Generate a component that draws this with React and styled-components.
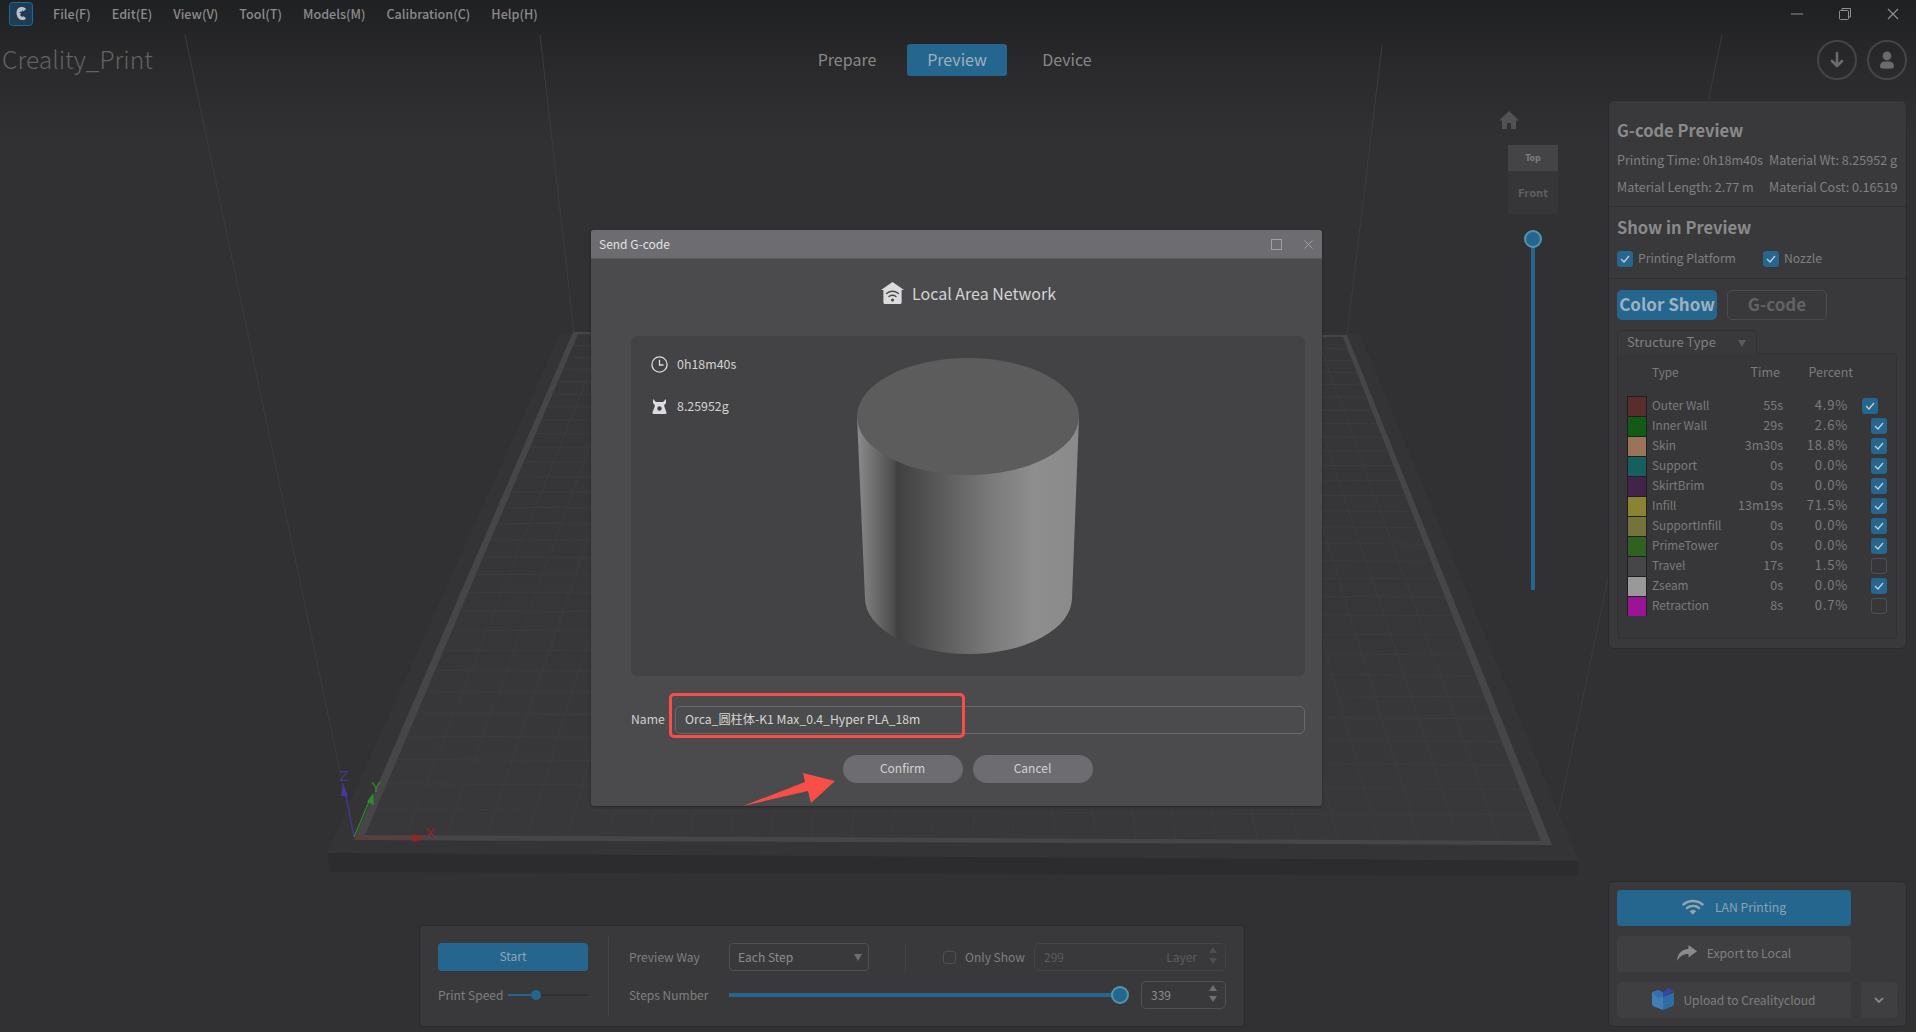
import React from 'react';
import styled, { createGlobalStyle } from 'styled-components';

const GlobalStyle = createGlobalStyle`
  html, body, #root { margin: 0; padding: 0; height: 100%; }
  body {
    background: #313133;
    font-family: "Noto Sans CJK SC", "Noto Sans", sans-serif;
    overflow: hidden;
  }
  * { box-sizing: border-box; }
`;

const BLUE = '#25668f';

const Page = styled.div`
  position: relative;
  width: 100vw;
  height: 100vh;
  overflow: hidden;
  background: linear-gradient(#1f2022 0, #2a2a2c 70px, #313133 140px, #313133 100%);
`;

const SceneSvg = styled.svg`
  position: absolute;
  inset: 0;
  width: 100%;
  height: 100%;
`;

const Shell = styled.div`
  position: relative;
  display: flex;
  flex-direction: column;
  height: 100%;
`;

const TitleBar = styled.div`
  display: flex;
  align-items: center;
  height: 28px;
  padding-left: 9px;
`;

const Menu = styled.nav`
  display: flex;
  gap: 21px;
  margin-left: 20px;
  padding-bottom: 2px;
  color: #8b8b8b;
  font-size: 12.6px;
  font-weight: 500;
`;

const WindowButtons = styled.div`
  display: flex;
  align-items: center;
  gap: 36px;
  margin-left: auto;
  padding-right: 17px;
  color: #8f8f8f;
`;

const HeaderRow = styled.header`
  display: grid;
  grid-template-columns: 1fr auto 1fr;
  align-items: center;
  height: 64px;
  padding: 0 9px 0 2px;
`;

const AppTitle = styled.div`
  color: #626262;
  font-size: 24.6px;
  font-weight: 300;
  line-height: 1;
  margin-bottom: 3px;
`;

const Tabs = styled.div`
  display: flex;
  align-items: center;
  margin-left: 5px;
`;

const Tab = styled.div`
  width: 100px;
  height: 32px;
  margin: 0 5px;
  padding-bottom: 3px;
  border-radius: 3px;
  display: flex;
  align-items: center;
  justify-content: center;
  font-size: 16px;
  color: ${(p) => (p.$active ? '#9fb0bc' : '#878787')};
  background: ${(p) => (p.$active ? BLUE : 'transparent')};
`;

const RoundButtons = styled.div`
  display: flex;
  justify-content: flex-end;
  gap: 10px;
`;

const RoundButton = styled.div`
  width: 40px;
  height: 40px;
  border-radius: 50%;
  border: 2px solid #454547;
  color: #6b6b6b;
  display: flex;
  align-items: center;
  justify-content: center;
`;

const Workspace = styled.main`
  flex: 1;
  display: flex;
  min-height: 0;
  padding: 0 9px 5px 419px;
`;

const CenterArea = styled.div`
  flex: 1;
  display: flex;
  flex-direction: column;
  justify-content: flex-end;
`;

const ControlPanel = styled.section`
  display: flex;
  width: 826px;
  height: 102px;
  padding: 11px 0 0 18px;
  background: #39393b;
  border: 1px solid #2b2b2d;
  border-radius: 5px;
`;

const StartColumn = styled.div`
  width: 150px;
  flex: none;
  padding-top: 6px;
  display: flex;
  flex-direction: column;
  gap: 10px;
`;

const StartButton = styled.div`
  height: 28px;
  padding-bottom: 3px;
  border-radius: 4px;
  background: ${BLUE};
  color: #8fa5b4;
  font-size: 12px;
  display: flex;
  align-items: center;
  justify-content: center;
`;

const FieldRow = styled.div`
  display: flex;
  align-items: center;
  height: 28px;
  font-size: 12px;
  color: #7f7f7f;
  white-space: nowrap;
`;

const RowText = styled.span`
  padding-bottom: 2px;
  flex: none;
  width: ${(p) => (p.$w ? `${p.$w}px` : 'auto')};
`;

const VDivider = styled.div`
  width: 1px;
  flex: none;
  height: ${(p) => p.$h}px;
  background: #454547;
  margin: 0 ${(p) => p.$right}px 0 ${(p) => p.$left}px;
`;

const ControlColumn = styled.div`
  width: 595px;
  flex: none;
  padding-top: 6px;
  display: flex;
  flex-direction: column;
  gap: 10px;
`;

const SelectBox = styled.div`
  position: relative;
  width: 140px;
  height: 28px;
  flex: none;
  padding: 0 0 2px 8px;
  border: 1px solid #515153;
  border-radius: 4px;
  color: #8c8c8c;
  display: flex;
  align-items: center;
`;

const Caret = styled.span`
  position: absolute;
  right: ${(p) => p.$right}px;
  top: ${(p) => p.$top}px;
  width: 0;
  height: 0;
  border-left: 4px solid transparent;
  border-right: 4px solid transparent;
  border-top: 7px solid ${(p) => p.$color || '#6e6e6e'};
`;

const NumberBox = styled.div`
  position: relative;
  width: ${(p) => p.$w}px;
  height: 28px;
  flex: none;
  margin-left: ${(p) => p.$ml || 0}px;
  padding: 0 28px 2px 9px;
  border: 1px solid ${(p) => (p.$off ? '#444446' : '#515153')};
  border-radius: 5px;
  color: ${(p) => (p.$off ? '#5c5c5c' : '#8c8c8c')};
  display: flex;
  align-items: center;
  justify-content: space-between;
`;

const Spinner = styled.span`
  position: absolute;
  right: 8px;
  top: 3px;
  display: flex;
  flex-direction: column;
  gap: 5px;
`;

const SpinArrow = styled.span`
  width: 0;
  height: 0;
  border-left: 4px solid transparent;
  border-right: 4px solid transparent;
  ${(p) => (p.$down ? 'border-top' : 'border-bottom')}: 6px solid ${(p) => (p.$off ? '#4e4e50' : '#6f6f6f')};
`;

const SliderTrack = styled.div`
  position: relative;
  flex: none;
  width: ${(p) => p.$w}px;
  height: ${(p) => p.$h}px;
  margin-left: ${(p) => p.$ml || 0}px;
  background: ${(p) => p.$bg};
`;

const SliderFill = styled.div`
  height: 100%;
  background: ${BLUE};
`;

const Knob = styled.span`
  position: absolute;
  top: 50%;
  width: ${(p) => p.$size}px;
  height: ${(p) => p.$size}px;
  transform: translate(-50%, -50%);
  border-radius: 50%;
  background: ${BLUE};
  border: ${(p) => (p.$ring ? '2px solid #4f97ad' : 'none')};
`;

const ViewTools = styled.aside`
  width: 59px;
  margin-right: 50px;
  padding-top: 19px;
  display: flex;
  flex-direction: column;
`;

const HomeIcon = styled.svg`
  width: 20px;
  height: 18px;
  color: #525254;
`;

const CubeFace = styled.div`
  align-self: flex-end;
  width: 50px;
  height: ${(p) => p.$h}px;
  margin-top: ${(p) => p.$mt || 0}px;
  padding-top: ${(p) => p.$pt || 0}px;
  background: ${(p) => p.$bg};
  color: ${(p) => p.$color};
  font-family: "DejaVu Sans", sans-serif;
  font-weight: 700;
  font-size: ${(p) => p.$size}px;
  display: flex;
  align-items: center;
  justify-content: center;
`;

const LayerSlider = styled.div`
  position: relative;
  align-self: flex-end;
  margin: 24px 23px 0 0;
  width: 4px;
  height: 352px;
  background: ${BLUE};
`;

const LayerKnob = styled.span`
  position: absolute;
  left: 50%;
  top: -8px;
  width: 18px;
  height: 18px;
  transform: translateX(-50%);
  border-radius: 50%;
  background: ${BLUE};
  border: 2px solid #4f97ad;
`;

const SideColumn = styled.aside`
  width: 299px;
  padding-top: 8px;
  display: flex;
  flex-direction: column;
  justify-content: space-between;
`;

const Panel = styled.section`
  background: #39393b;
  border: 1px solid #2a2a2c;
  border-radius: 6px;
`;

const PanelSection = styled.div`
  padding: ${(p) => p.$pad};
  border-bottom: ${(p) => (p.$last ? 'none' : '1px solid #2f2f31')};
`;

const PanelTitle = styled.h2`
  margin: 0;
  font-size: 16.5px;
  font-weight: 700;
  line-height: 22px;
  color: #8a8a8a;
`;

const InfoGrid = styled.div`
  display: grid;
  grid-template-columns: 152px auto;
  grid-auto-rows: 27px;
  margin-top: 5px;
  font-size: 12.6px;
  color: #808080;
  white-space: nowrap;
  align-items: center;
`;

const CheckRow = styled.div`
  display: flex;
  align-items: center;
  margin-top: 13px;
  height: 16px;
  font-size: 12.2px;
  color: #808080;
`;

const CheckLabel = styled.span`
  width: ${(p) => (p.$w ? `${p.$w}px` : 'auto')};
  padding-bottom: 2px;
`;

const Box = styled.span`
  flex: none;
  width: ${(p) => p.$size || 16}px;
  height: ${(p) => p.$size || 16}px;
  border-radius: 3px;
  color: #c3cdd4;
  background: ${(p) => (p.$on ? BLUE : 'transparent')};
  border: ${(p) => (p.$on ? 'none' : '1px solid #505052')};
  margin-right: ${(p) => p.$mr || 0}px;
  display: flex;
  align-items: center;
  justify-content: center;
`;

const PushButtons = styled.div`
  display: flex;
  gap: 10px;
`;

const ModeButton = styled.div`
  width: 100px;
  height: 30px;
  padding-bottom: 3px;
  border-radius: 5px;
  font-size: 17px;
  font-weight: 700;
  display: flex;
  align-items: center;
  justify-content: center;
  color: ${(p) => (p.$active ? '#9db2c0' : '#626264')};
  background: ${(p) => (p.$active ? BLUE : 'transparent')};
  border: ${(p) => (p.$active ? 'none' : '1px solid #4b4b4d')};
`;

const DropTab = styled.div`
  position: relative;
  width: 140px;
  height: 24px;
  margin-top: 10px;
  margin-bottom: -1px;
  padding-left: 9px;
  background: #39393b;
  border: 1px solid #313133;
  border-bottom: none;
  border-radius: 4px 4px 0 0;
  font-size: 13px;
  line-height: 21px;
  color: #808080;
  z-index: 1;
`;

const TableBox = styled.div`
  height: 286px;
  padding: 8px 0 0 9px;
  background: #373739;
  border: 1px solid #313133;
  border-radius: 0 4px 4px 4px;
`;

const TableRow = styled.div`
  display: grid;
  grid-template-columns: 25px 86px 45px 65px 1fr;
  height: 20px;
  align-items: center;
  font-size: 12.5px;
  color: #7b7b7b;
  margin-bottom: ${(p) => (p.$head ? 13 : 0)}px;
`;

const Swatch = styled.span`
  width: 20px;
  height: 20px;
  background: ${(p) => p.$color};
  border: 1px solid #1f1f21;
  border-width: 1px 1px 0;
`;

const Cell = styled.span`
  text-align: right;
  white-space: nowrap;
  padding-bottom: 2px;
  margin-right: ${(p) => p.$shift || 0}px;
`;

const PercentCell = styled(Cell)`
  font-size: 13px;
  letter-spacing: 0.8px;
`;

const TypeCell = styled.span`
  white-space: nowrap;
  padding-bottom: 2px;
  font-size: 11.8px;
`;

const CheckCell = styled.span`
  display: flex;
  padding-left: ${(p) => (p.$first ? 14 : 23)}px;
`;

const PrintPanel = styled(Panel)`
  height: 146px;
  padding: 8px 8px;
  display: grid;
  grid-template-columns: 234px 36px;
  grid-auto-rows: 36px;
  column-gap: 10px;
  row-gap: 10px;
`;

const PrintButton = styled.div`
  grid-column: 1;
  padding-bottom: 2px;
  border-radius: 4px;
  background: ${(p) => (p.$primary ? BLUE : '#3f3f41')};
  color: ${(p) => (p.$primary ? '#8ea3b2' : '#7e7e7e')};
  font-size: ${(p) => p.$size || 12.2}px;
  display: flex;
  align-items: center;
  justify-content: center;
  gap: ${(p) => p.$gap}px;
`;

const MoreButton = styled.div`
  grid-column: 2;
  border-radius: 4px;
  background: #3f3f41;
  color: #858585;
  display: flex;
  align-items: center;
  justify-content: center;
`;

const Dialog = styled.div`
  position: absolute;
  left: 591px;
  top: 230px;
  width: 731px;
  height: 576px;
  background: #4b4b4d;
  border-radius: 3px;
  box-shadow: 0 1px 3px rgba(0, 0, 0, 0.35);
  overflow: visible;
  display: flex;
  flex-direction: column;
`;

const DialogBar = styled.div`
  height: 29px;
  flex: none;
  padding: 0 9px 2px 8px;
  background: #6d6c70;
  border-bottom: 1px solid #5a5a5c;
  border-radius: 3px 3px 0 0;
  color: #e2e2e2;
  font-size: 12px;
  display: flex;
  align-items: center;
  justify-content: space-between;
`;

const DialogControls = styled.div`
  display: flex;
  align-items: center;
  gap: 22px;
  padding-left: 0;
  margin-top: 2px;
  color: #a2a2a4;
`;

const DialogHeading = styled.div`
  height: 77px;
  flex: none;
  display: flex;
  align-items: center;
  justify-content: center;
  gap: 8px;
  padding: 0 0 9px 24px;
  font-size: 16px;
  color: #d3d3d3;
`;

const Preview = styled.div`
  margin: 0 17px 0 40px;
  height: 340px;
  flex: none;
  padding: 21px 20px;
  background: #434345;
  border-radius: 6px;
  display: grid;
  grid-template-columns: 1fr auto 1fr;
`;

const Stats = styled.div`
  display: flex;
  flex-direction: column;
  gap: 25px;
  margin-top: -1px;
  color: #d3d3d3;
  font-size: 12.4px;
`;

const Stat = styled.div`
  display: flex;
  align-items: center;
  gap: 9px;
  height: 17px;
`;

const StatText = styled.span`
  padding-bottom: 2px;
`;

const CylinderSvg = styled.svg`
  margin-top: 1px;
`;

const NameRow = styled.div`
  position: relative;
  margin: 30px 17px 0 40px;
  display: flex;
  align-items: center;
  height: 28px;
  font-size: 12.2px;
  color: #cfcfcf;
`;

const NameLabel = styled.span`
  width: 44px;
  flex: none;
  padding-bottom: 2px;
`;

const NameInput = styled.div`
  flex: 1;
  height: 28px;
  padding: 0 0 2px 9px;
  border: 1px solid #68686a;
  border-radius: 5px;
  display: flex;
  align-items: center;
  color: #d6d6d6;
`;

const RedFrame = styled.div`
  position: absolute;
  left: 38px;
  top: -13px;
  width: 296px;
  height: 45px;
  border: 3px solid #f94d47;
  border-radius: 5px;
`;

const DialogActions = styled.div`
  display: flex;
  justify-content: center;
  gap: 10px;
  margin-top: 21px;
  padding-left: 22px;
`;

const PillButton = styled.div`
  width: 120px;
  height: 28px;
  padding-bottom: 3px;
  border-radius: 14px;
  background: #6d6c70;
  color: #d3d3d3;
  font-size: 12px;
  display: flex;
  align-items: center;
  justify-content: center;
`;

const ArrowMark = styled.svg`
  position: absolute;
  left: 152px;
  top: 543px;
  width: 92px;
  height: 33px;
`;

const menuItems = ['File(F)', 'Edit(E)', 'View(V)', 'Tool(T)', 'Models(M)', 'Calibration(C)', 'Help(H)'];

const rows = [
  { name: 'Outer Wall', time: '55s', pct: '4.9%', color: '#5a2d2d', on: true, first: true },
  { name: 'Inner Wall', time: '29s', pct: '2.6%', color: '#145a17', on: true },
  { name: 'Skin', time: '3m30s', pct: '18.8%', color: '#9a7459', on: true },
  { name: 'Support', time: '0s', pct: '0.0%', color: '#175e5e', on: true },
  { name: 'SkirtBrim', time: '0s', pct: '0.0%', color: '#40244a', on: true },
  { name: 'Infill', time: '13m19s', pct: '71.5%', color: '#8a8432', on: true },
  { name: 'SupportInfill', time: '0s', pct: '0.0%', color: '#73733a', on: true },
  { name: 'PrimeTower', time: '0s', pct: '0.0%', color: '#2f6222', on: true },
  { name: 'Travel', time: '17s', pct: '1.5%', color: '#464548', on: false },
  { name: 'Zseam', time: '0s', pct: '0.0%', color: '#999999', on: true },
  { name: 'Retraction', time: '8s', pct: '0.7%', color: '#9a1496', on: false },
];

const Tick = () => (
  <svg width="10" height="8" viewBox="0 0 10 8" fill="none" stroke="currentColor" strokeWidth="1.4">
    <path d="M1 4l3 3 5-6" />
  </svg>
);

const Logo = () => (
  <svg width="24" height="24" viewBox="0 0 24 24">
    <rect x="0.5" y="0.5" width="23" height="23" rx="3" fill="#1f3c55" stroke="#1c6a96" />
    <path d="M17 7c-2-2.6-6.6-2.6-8.4 0-1.8 2.6-1.2 7 1 9.4 2 2 5.4 2.2 7.4.4l-2-2.6c-1 .8-2.6.6-3.4-.4-.6-1-.4-2 .4-2.4l-2-1.4 3-.4.4-1.8 1 1.6z" fill="#b9c0c6" />
  </svg>
);

// perspective grid of the print bed, the far edge is about 0.65 of the near one
const bedGrid = () => {
  const n = 29;
  const near = { y: 835, left: 365, right: 1541, yRight: 841 };
  const far = { y: 334, left: 578, right: 1343, yRight: 337 };
  const lines = [];
  for (let i = 1; i < n; i++) {
    const s = i / n;
    const w = 1 / (1 + 0.538 * s);
    const p = (1 - w) / 0.35;
    const lerp = (a, b) => a + (b - a) * p;
    lines.push(
      <line key={`h${i}`} x1={lerp(near.left, far.left)} y1={lerp(near.y, far.y)} x2={lerp(near.right, far.right)} y2={lerp(near.yRight, far.yRight)} />
    );
    const xa = near.left + (near.right - near.left) * s;
    const xb = far.left + (far.right - far.left) * s;
    lines.push(<line key={`v${i}`} x1={xa} y1={835 + 6 * s} x2={xb} y2={334 + 3 * s} />);
  }
  return lines;
};

const Scene = () => (
  <SceneSvg viewBox="0 0 1916 1032" preserveAspectRatio="none">
    <defs>
      <linearGradient id="bedFill" x1="0" y1="0" x2="0" y2="1">
        <stop offset="0" stopColor="#353537" />
        <stop offset="1" stopColor="#38383a" />
      </linearGradient>
    </defs>
    <g stroke="#3c3c3e" strokeWidth="1" fill="none">
      <line x1="185" y1="35" x2="354" y2="838" />
      <line x1="540" y1="35" x2="574" y2="332" />
      <line x1="1382" y1="45" x2="1347" y2="335" />
      <line x1="1722" y1="35" x2="1552" y2="845" />
    </g>
    <polygon points="560,334 1360,334 1579,861 327,853" fill="#343436" />
    <polygon points="327,853 1579,861 1577,876 331,872" fill="#2c2c2e" />
    <polygon points="573,332 1347,335 1552,845 354,840" fill="#464648" />
    <polygon points="578,334 1343,337 1541,841 365,835" fill="url(#bedFill)" />
    <g stroke="#3d3d3f" strokeWidth="0.8">{bedGrid()}</g>
    <g fill="none" strokeWidth="1.2">
      <path d="M354 837L345 790" stroke="#46379a" />
      <path d="M354 837L371 797" stroke="#2f8a2a" />
      <path d="M354 838L420 838" stroke="#9a2222" />
    </g>
    <polygon points="343,783 348,796 341,796" fill="#46379a" />
    <polygon points="373,793 374,805 367,802" fill="#2f8a2a" />
    <polygon points="425,838 413,834 413,842" fill="#9a2222" />
    <g fontFamily="Liberation Sans, sans-serif" fontSize="15" textAnchor="middle">
      <text x="344" y="781" fill="#46379a">Z</text>
      <text x="376" y="792" fill="#2f8a2a">Y</text>
      <text x="430" y="838" fill="#9a2222">X</text>
    </g>
  </SceneSvg>
);

const Cylinder = () => (
  <CylinderSvg width="222" height="298" viewBox="0 0 222 298">
    <defs>
      <linearGradient id="cylSide" x1="0" y1="0" x2="1" y2="0">
        <stop offset="0" stopColor="#8b8b8b" />
        <stop offset="0.168" stopColor="#4c4c4c" />
        <stop offset="0.18" stopColor="#404040" />
        <stop offset="0.3" stopColor="#505050" />
        <stop offset="0.62" stopColor="#7c7c7c" />
        <stop offset="0.8" stopColor="#8e8e8e" />
        <stop offset="1" stopColor="#8a8a8a" />
      </linearGradient>
    </defs>
    <path d="M0 58.5L8 240A103.5 56 0 0 0 215 240L222 58.5Z" fill="url(#cylSide)" />
    <ellipse cx="111" cy="58.5" rx="111" ry="58.5" fill="#5c5c5c" />
  </CylinderSvg>
);

const App = () => {
  return (
    <Page>
      <GlobalStyle />
      <Scene />
      <Shell>
        <TitleBar>
          <Logo />
          <Menu>
            {menuItems.map((m) => (
              <span key={m}>{m}</span>
            ))}
          </Menu>
          <WindowButtons>
            <svg width="12" height="12" viewBox="0 0 12 12" stroke="currentColor" fill="none"><path d="M0 6h12" /></svg>
            <svg width="12" height="12" viewBox="0 0 12 12" stroke="currentColor" fill="none"><rect x="0.5" y="2.5" width="9" height="9" rx="1" /><path d="M3 2.5V.5h8.5V9H9.5" /></svg>
            <svg width="12" height="12" viewBox="0 0 12 12" stroke="currentColor" fill="none" strokeWidth="1.2"><path d="M1 1l10 10M11 1L1 11" /></svg>
          </WindowButtons>
        </TitleBar>
        <HeaderRow>
          <AppTitle>Creality_Print</AppTitle>
          <Tabs>
            <Tab>Prepare</Tab>
            <Tab $active>Preview</Tab>
            <Tab>Device</Tab>
          </Tabs>
          <RoundButtons>
            <RoundButton>
              <svg width="14" height="18" viewBox="0 0 14 18" fill="none" stroke="currentColor" strokeWidth="2.6" strokeLinecap="round" strokeLinejoin="round"><path d="M7 2v13M2 10l5 5 5-5" /></svg>
            </RoundButton>
            <RoundButton>
              <svg width="16" height="18" viewBox="0 0 16 18" fill="currentColor"><circle cx="8" cy="5" r="4.4" /><path d="M1.5 17c-1.4-3.6 1-6.6 3.5-6.6h6c2.5 0 4.9 3 3.5 6.6-1.8 1-11.2 1-13 0z" /></svg>
            </RoundButton>
          </RoundButtons>
        </HeaderRow>
        <Workspace>
          <CenterArea>
            <ControlPanel>
              <StartColumn>
                <StartButton>Start</StartButton>
                <FieldRow>
                  <RowText $w={65}>Print Speed</RowText>
                  <SliderTrack $w={80} $h={2} $ml={5} $bg="#2f2f31">
                    <SliderFill style={{ width: '35%' }} />
                    <Knob $size={10} style={{ left: '35%' }} />
                  </SliderTrack>
                </FieldRow>
              </StartColumn>
              <VDivider $h={80} $left={20} $right={20} />
              <ControlColumn>
                <FieldRow>
                  <RowText $w={100}>Preview Way</RowText>
                  <SelectBox>
                    Each Step
                    <Caret $right={6} $top={10} />
                  </SelectBox>
                  <VDivider $h={28} $left={36} $right={37} />
                  <Box $size={13} $mr={9} />
                  <RowText $w={58}>Only Show</RowText>
                  <NumberBox $off $w={192} $ml={11}>
                    <span>299</span>
                    <span>Layer</span>
                    <Spinner>
                      <SpinArrow $off />
                      <SpinArrow $off $down />
                    </Spinner>
                  </NumberBox>
                </FieldRow>
                <FieldRow>
                  <RowText $w={100}>Steps Number</RowText>
                  <SliderTrack $w={391} $h={4} $bg={BLUE}>
                    <Knob $ring $size={18} style={{ left: '100%' }} />
                  </SliderTrack>
                  <NumberBox $w={85} $ml={21}>
                    <span>339</span>
                    <Spinner>
                      <SpinArrow />
                      <SpinArrow $down />
                    </Spinner>
                  </NumberBox>
                </FieldRow>
              </ControlColumn>
            </ControlPanel>
          </CenterArea>
          <ViewTools>
            <HomeIcon viewBox="0 0 20 18" fill="currentColor">
              <path d="M10 0L0 9.5h3V18h5v-6h4v6h5V9.5h3z" />
            </HomeIcon>
            <CubeFace $h={26} $mt={16} $bg="#444446" $color="#7b7b7b" $size={8}>Top</CubeFace>
            <CubeFace $h={43} $pt={2} $bg="#363638" $color="#5d5d5f" $size={10}>Front</CubeFace>
            <LayerSlider>
              <LayerKnob />
            </LayerSlider>
          </ViewTools>
          <SideColumn>
            <Panel>
              <PanelSection $pad="18px 8px 6px 8px">
                <PanelTitle>G-code Preview</PanelTitle>
                <InfoGrid>
                  <span>Printing Time: 0h18m40s</span>
                  <span>Material Wt: 8.25952 g</span>
                  <span>Material Length: 2.77 m</span>
                  <span>Material Cost: 0.16519</span>
                </InfoGrid>
              </PanelSection>
              <PanelSection $pad="9px 8px 11px 8px">
                <PanelTitle>Show in Preview</PanelTitle>
                <CheckRow>
                  <Box $on $mr={5}><Tick /></Box>
                  <CheckLabel $w={125}>Printing Platform</CheckLabel>
                  <Box $on $mr={5}><Tick /></Box>
                  <CheckLabel>Nozzle</CheckLabel>
                </CheckRow>
              </PanelSection>
              <PanelSection $last $pad="11px 9px 9px 8px">
                <PushButtons>
                  <ModeButton $active>Color Show</ModeButton>
                  <ModeButton>G-code</ModeButton>
                </PushButtons>
                <DropTab>
                  Structure Type
                  <Caret $right={10} $top={9} $color="#5c5c5e" />
                </DropTab>
                <TableBox>
                  <TableRow $head>
                    <span />
                    <TypeCell>Type</TypeCell>
                    <Cell $shift={3}>Time</Cell>
                    <Cell $shift={-5}>Percent</Cell>
                    <span />
                  </TableRow>
                  {rows.map((r) => (
                    <TableRow key={r.name}>
                      <Swatch $color={r.color} />
                      <TypeCell>{r.name}</TypeCell>
                      <Cell>{r.time}</Cell>
                      <PercentCell>{r.pct}</PercentCell>
                      <CheckCell $first={r.first}>
                        <Box $on={r.on}>{r.on && <Tick />}</Box>
                      </CheckCell>
                    </TableRow>
                  ))}
                </TableBox>
              </PanelSection>
            </Panel>
            <PrintPanel>
              <PrintButton $primary $gap={11}>
                <svg width="22" height="16" viewBox="0 0 22 16" fill="none" stroke="#94a5b1" strokeWidth="2.4" strokeLinecap="round">
                  <path d="M1.5 5.5c5.4-4.6 13.6-4.6 19 0M5 9c3.4-2.8 8.6-2.8 12 0" />
                  <path d="M8.4 12.2c1.6-1.2 3.6-1.2 5.2 0L11 15z" fill="#94a5b1" strokeWidth="1" />
                </svg>
                LAN Printing
              </PrintButton>
              <span />
              <PrintButton $gap={10}>
                <svg width="20" height="16" viewBox="0 0 20 16" fill="#8a8a8a">
                  <path d="M11.5 0L20 6.2l-8.5 6.4V9C6.6 8.8 2.8 11 0 16c.4-7 4.4-11.6 11.5-12.2z" />
                </svg>
                Export to Local
              </PrintButton>
              <span />
              <PrintButton $gap={9} $size={12}>
                <svg width="22" height="22" viewBox="0 0 22 22">
                  <path d="M0 4.5L6 2l5 2.5V22L2 18.5C.8 18 0 17 0 15.5z" fill="#3f7fb5" />
                  <path d="M11 22l9-3.5c1.2-.6 2-1.6 2-3V4.5L11 9z" fill="#2f6da6" />
                  <path d="M11 4.5L16 0l6 3-11 6z" fill="#3a44a8" />
                  <path d="M0 4.5L6 2l5 2.5V9L6 10z" fill="#3470b0" />
                </svg>
                Upload to Crealitycloud
              </PrintButton>
              <MoreButton>
                <svg width="10" height="7" viewBox="0 0 10 7" fill="none" stroke="currentColor" strokeWidth="1.8"><path d="M1 1l4 4 4-4" /></svg>
              </MoreButton>
            </PrintPanel>
          </SideColumn>
        </Workspace>
      </Shell>
      <Dialog>
        <DialogBar>
          <span>Send G-code</span>
          <DialogControls>
            <svg width="11" height="11" viewBox="0 0 11 11" fill="none" stroke="currentColor"><rect x="0.5" y="0.5" width="10" height="10" /></svg>
            <svg width="9" height="9" viewBox="0 0 9 9" fill="none" stroke="currentColor"><path d="M.5.5l8 8M8.5.5l-8 8" /></svg>
          </DialogControls>
        </DialogBar>
        <DialogHeading>
          <svg width="23" height="22" viewBox="0 0 23 22">
            <path d="M11.5 0L23 8h-2.4v12.5c0 .8-.7 1.5-1.5 1.5H3.9c-.8 0-1.5-.7-1.5-1.5V8H0z" fill="#dcdcdc" />
            <g fill="none" stroke="#4b4b4d" strokeWidth="1.5" strokeLinecap="round">
              <path d="M5.5 11.5c3.6-2.6 8.4-2.6 12 0M8 14.5c2.2-1.5 4.8-1.5 7 0" />
            </g>
            <circle cx="11.5" cy="18" r="1.6" fill="#4b4b4d" />
          </svg>
          Local Area Network
        </DialogHeading>
        <Preview>
          <Stats>
            <Stat>
              <svg width="17" height="17" viewBox="0 0 17 17" fill="none" stroke="#dcdcdc" strokeWidth="1.3"><circle cx="8.5" cy="8.5" r="7.6" /><path d="M8.5 3.8v5.2h4" /></svg>
              <StatText>0h18m40s</StatText>
            </Stat>
            <Stat>
              <svg width="17" height="15" viewBox="0 0 17 15">
                <path d="M2 0l3 3h7l3-3v4l-2 2.4 2.5 7.2c.2.7-.3 1.4-1 1.4H2.5c-.7 0-1.2-.7-1-1.4L4 6.4 2 4z" fill="#dcdcdc" />
                <circle cx="8.5" cy="9.5" r="2.2" fill="#434345" />
              </svg>
              <StatText>8.25952g</StatText>
            </Stat>
          </Stats>
          <Cylinder />
        </Preview>
        <NameRow>
          <NameLabel>Name</NameLabel>
          <NameInput>Orca_圆柱体-K1 Max_0.4_Hyper PLA_18m</NameInput>
          <RedFrame />
        </NameRow>
        <DialogActions>
          <PillButton>Confirm</PillButton>
          <PillButton>Cancel</PillButton>
        </DialogActions>
        <ArrowMark viewBox="0 0 92 33" fill="#f94d47">
          <path d="M0 33L62 9 60 0 92 8 68 30 65 18z" />
        </ArrowMark>
      </Dialog>
    </Page>
  );
};

export default App;
